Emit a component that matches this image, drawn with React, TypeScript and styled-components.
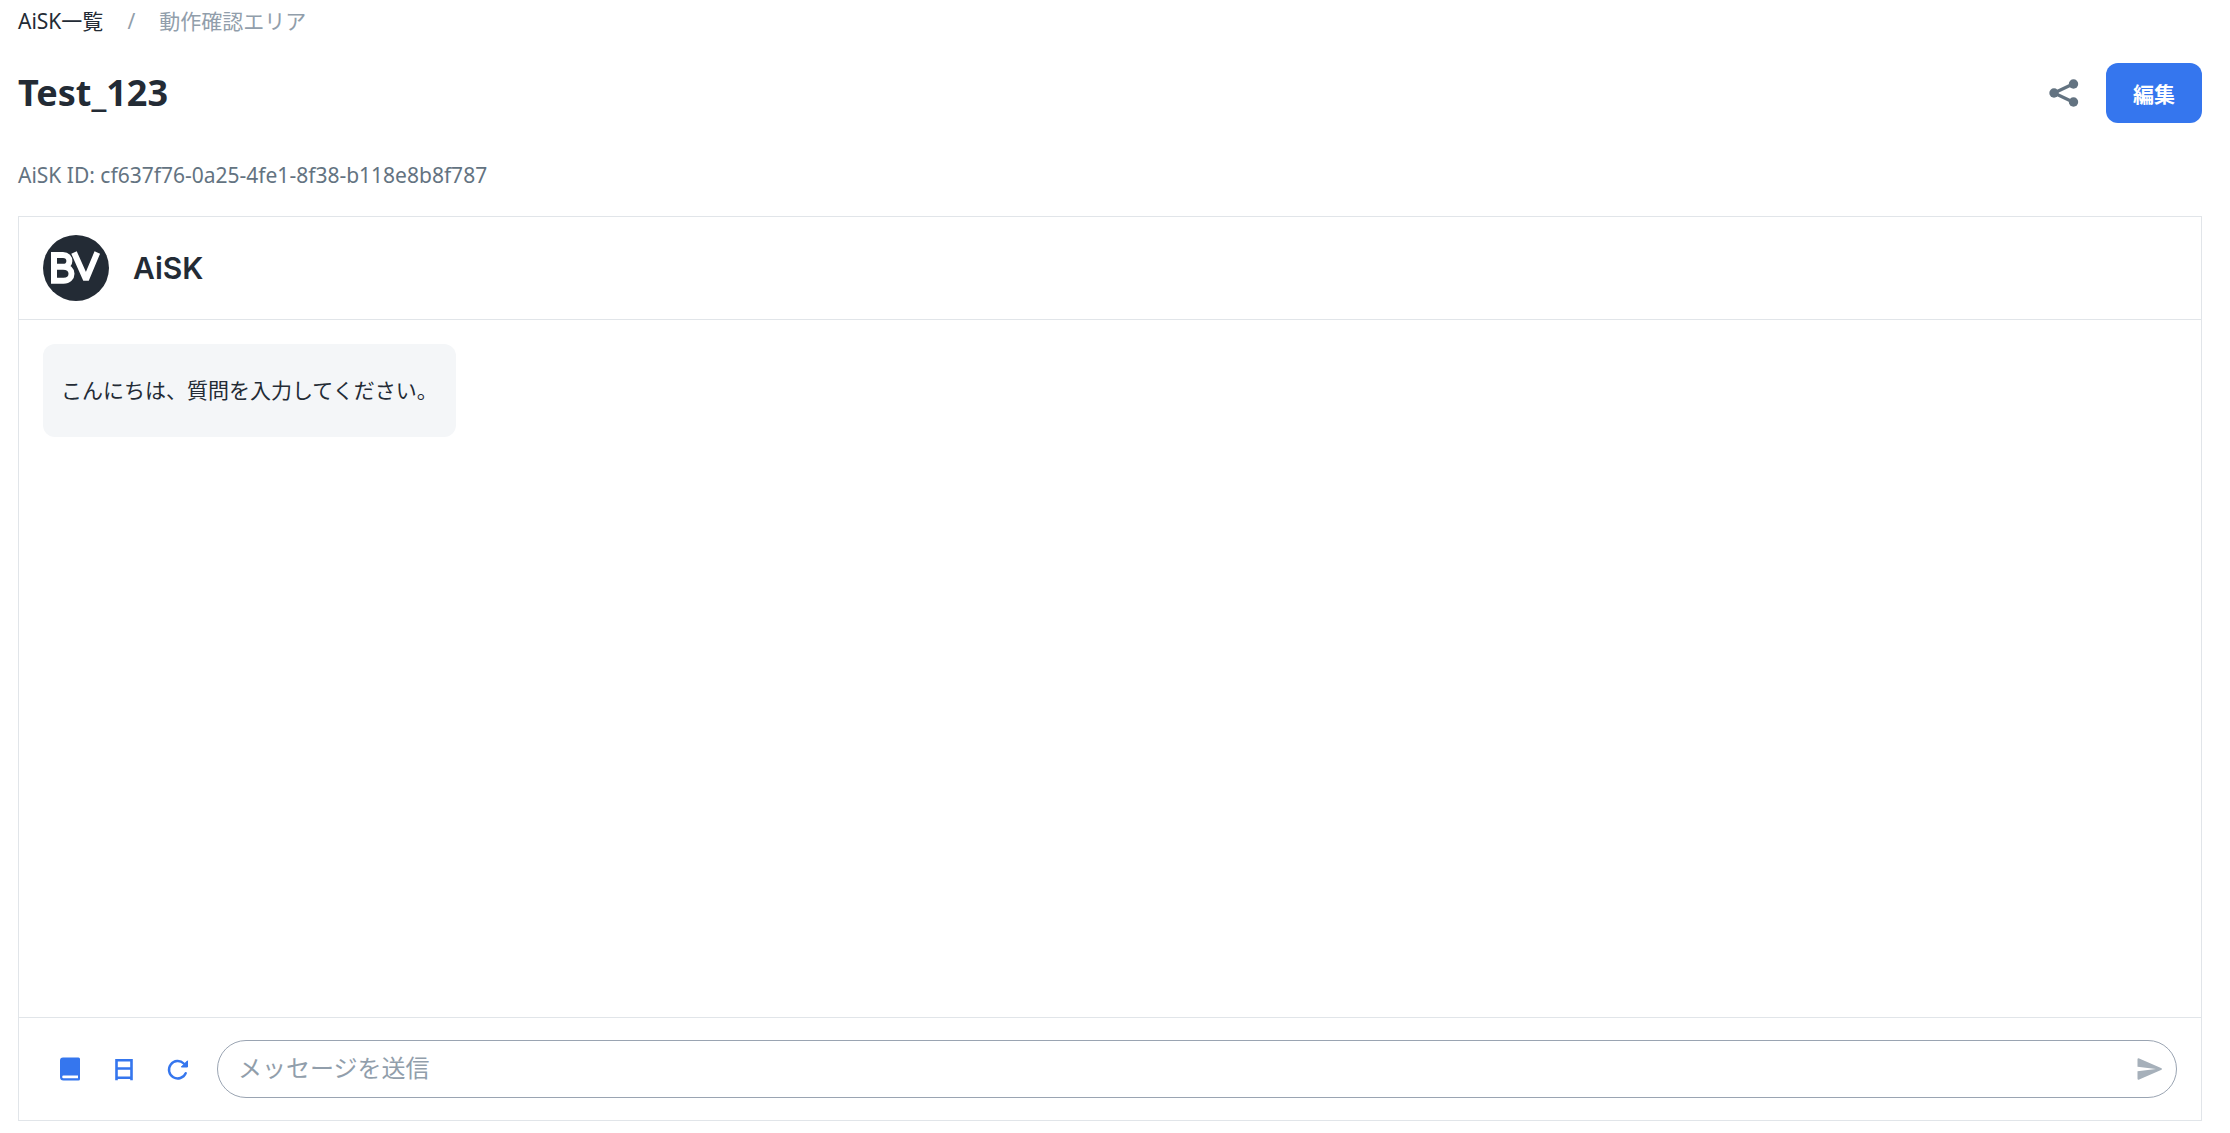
import React, { useState } from "react";
import styled, { createGlobalStyle } from "styled-components";

const uiFont = `"Noto Sans", "Noto Sans CJK JP", sans-serif`;
const chatFont = `"Liberation Sans", "Noto Sans CJK JP", sans-serif`;

const GlobalStyle = createGlobalStyle`
  *, *::before, *::after { box-sizing: border-box; }
  body { margin: 0; background: #fff; color: #232b35; font-family: ${uiFont}; }
`;

const Page = styled.main`
  display: flex;
  flex-direction: column;
  min-height: 100vh;
  padding: 6px 28px 12px 18px;
`;

const Breadcrumb = styled.nav`
  font-size: 21px;
  line-height: 30px;

  ol {
    display: flex;
    margin: 0;
    padding: 0;
    list-style: none;
  }

  li + li::before {
    content: "/";
    margin: 0 24px;
  }

  li { color: #919eab; }
`;

const CrumbLink = styled.a`
  color: #232b35;
  text-decoration: none;
`;

const TitleBar = styled.header`
  display: flex;
  align-items: center;
  justify-content: space-between;
  margin-top: 27px;
`;

const Title = styled.h1`
  margin: 0;
  font-size: 36px;
  line-height: 54px;
  font-weight: 700;
`;

const Actions = styled.div`
  display: flex;
  align-items: center;
  gap: 15px;
`;

const IconButton = styled.button<{ $color: string }>`
  display: grid;
  place-items: center;
  width: 54px;
  height: 54px;
  padding: 0;
  border: 0;
  border-radius: 50%;
  background: transparent;
  color: ${(p) => p.$color};
  cursor: pointer;
`;

const EditButton = styled.button`
  width: 96px;
  height: 60px;
  border: 0;
  border-radius: 12px;
  background: #3576ee;
  color: #fff;
  font-family: ${uiFont};
  font-size: 21px;
  font-weight: 700;
  cursor: pointer;
`;

const Identifier = styled.p`
  margin: 36px 0 24px;
  color: #637381;
  font-size: 21px;
  line-height: 33px;
`;

const Panel = styled.section`
  display: flex;
  flex: 1;
  flex-direction: column;
  border: 1px solid #e1e5e9;
  font-family: ${chatFont};
`;

const PanelHeader = styled.header`
  display: flex;
  align-items: center;
  gap: 24px;
  padding: 18px 24px;
  border-bottom: 1px solid #e1e5e9;
`;

const PanelTitle = styled.h2`
  margin: 0;
  font-family: Inter, ${chatFont};
  font-size: 30px;
  line-height: 42px;
  font-weight: 600;
`;

const Messages = styled.div`
  flex: 1;
  padding: 24px;
`;

const Bubble = styled.p`
  width: fit-content;
  margin: 0;
  padding: 30px 18px;
  border-radius: 12px;
  background: #f4f6f8;
  font-size: 21px;
  line-height: 33px;
`;

const Composer = styled.form`
  display: flex;
  align-items: center;
  padding: 22px 24px;
  border-top: 1px solid #e1e5e9;
`;

const MessageField = styled.div`
  display: flex;
  flex: 1;
  align-items: center;
  height: 58px;
  margin-left: 12px;
  border: 1px solid #9aa4b2;
  border-radius: 29px;
`;

const MessageInput = styled.input`
  flex: 1;
  min-width: 0;
  padding: 0 0 0 20px;
  border: 0;
  outline: 0;
  background: transparent;
  color: #232b35;
  font-family: ${chatFont};
  font-size: 24px;

  &::placeholder { color: #919eab; opacity: 1; }
`;

const Logo = () => (
  <svg width="66" height="66" viewBox="0 0 66 66" role="img" aria-label="BV">
    <circle cx="33" cy="33" r="33" fill="#232b35" />
    <g fill="none" stroke="#fff" strokeWidth="6">
      <path d="M11 20H20C28.500 20 28.500 31.800 20 31.800H11M20 31.800C31.500 31.800 31 45.800 20.500 45.800H11M11 17V48.800" />
      <path d="M31 17.500L43 44.500L54.300 17.500" strokeLinejoin="bevel" />
    </g>
  </svg>
);

const ShareIcon = () => (
  <svg width="36" height="36" viewBox="0 0 36 36" aria-hidden="true">
    <path d="M27 9L8 18L27 27" fill="none" stroke="currentColor" strokeWidth="3.200" />
    <g fill="currentColor">
      <circle cx="27.500" cy="9" r="4.700" />
      <circle cx="8" cy="18" r="4.700" />
      <circle cx="27.500" cy="27" r="4.700" />
    </g>
  </svg>
);

const BookIcon = () => (
  <svg width="30" height="30" viewBox="0 0 30 30" aria-hidden="true">
    <path
      fill="currentColor"
      fillRule="evenodd"
      d="M8 3.500H23.500Q25 3.500 25 5V25Q25 26.500 23.500 26.500H8.500Q5 26.500 5 23V6.500Q5 3.500 8 3.500ZM8.500 21.500Q7.200 21.500 7.200 22.900Q7.200 24.300 8.500 24.300H23V21.500Z"
    />
  </svg>
);

const DayIcon = () => (
  <svg width="30" height="30" viewBox="0 0 30 30" aria-hidden="true">
    <path d="M7.500 26.200V6.300H22.500V26.200M7.500 14.500H22.500M7.500 23.800H22.500" fill="none" stroke="currentColor" strokeWidth="2.600" />
  </svg>
);

const RefreshIcon = () => (
  <svg width="30" height="30" viewBox="0 0 30 30" aria-hidden="true">
    <path d="M22.700 19.200A8.700 8.700 0 1 1 20.800 9.500" fill="none" stroke="currentColor" strokeWidth="2.400" strokeLinecap="round" />
    <path d="M24.500 6.800V13H18.300Z" fill="currentColor" stroke="currentColor" strokeWidth="1" strokeLinejoin="round" />
  </svg>
);

const SendIcon = () => (
  <svg width="30" height="30" viewBox="0 0 30 30" aria-hidden="true">
    <path d="M3.500 5.500Q3.500 3.700 5.200 4.400L27 14Q29 15 27 16L5.200 25.600Q3.500 26.300 3.500 24.500V17.200L22 15L3.500 12.800Z" fill="currentColor" />
  </svg>
);

export default function App() {
  const [message, setMessage] = useState("");

  return (
    <>
      <GlobalStyle />
      <Page>
        <Breadcrumb aria-label="パンくずリスト">
          <ol>
            <li><CrumbLink href="#">AiSK一覧</CrumbLink></li>
            <li aria-current="page">動作確認エリア</li>
          </ol>
        </Breadcrumb>

        <TitleBar>
          <Title>Test_123</Title>
          <Actions>
            <IconButton type="button" $color="#637381" aria-label="共有"><ShareIcon /></IconButton>
            <EditButton type="button">編集</EditButton>
          </Actions>
        </TitleBar>

        <Identifier>AiSK ID: cf637f76-0a25-4fe1-8f38-b118e8b8f787</Identifier>

        <Panel>
          <PanelHeader>
            <Logo />
            <PanelTitle>AiSK</PanelTitle>
          </PanelHeader>
          <Messages>
            <Bubble>こんにちは、質問を入力してください。</Bubble>
          </Messages>
          <Composer onSubmit={(event) => event.preventDefault()}>
            <IconButton type="button" $color="#3576ee" aria-label="ナレッジ"><BookIcon /></IconButton>
            <IconButton type="button" $color="#3576ee" aria-label="言語"><DayIcon /></IconButton>
            <IconButton type="button" $color="#3576ee" aria-label="リセット"><RefreshIcon /></IconButton>
            <MessageField>
              <MessageInput
                aria-label="メッセージ"
                placeholder="メッセージを送信"
                value={message}
                onChange={(event) => setMessage(event.target.value)}
              />
              <IconButton type="submit" $color="#a6b0ba" aria-label="送信"><SendIcon /></IconButton>
            </MessageField>
          </Composer>
        </Panel>
      </Page>
    </>
  );
}
